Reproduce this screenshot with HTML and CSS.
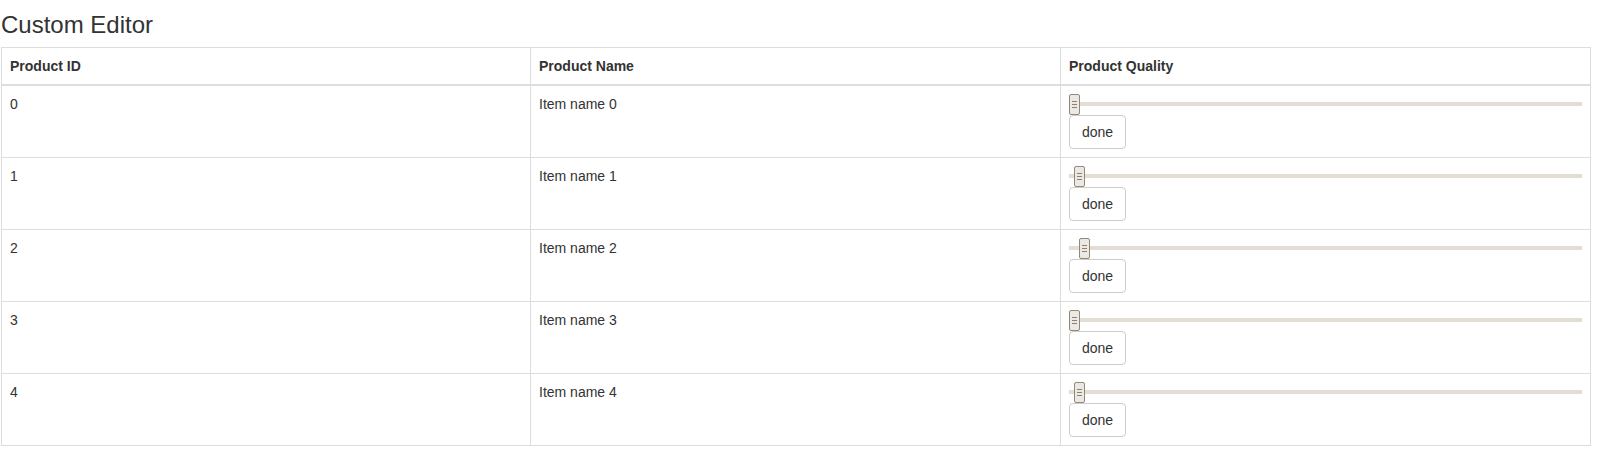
FILE: index.html
```html
<!DOCTYPE html>
<html lang="en">
<head>
<meta charset="utf-8">
<title>Custom Editor</title>
<link rel="stylesheet" href="styles.css">
</head>
<body>
<div class="page">
  <h3 class="title">Custom Editor</h3>
  <table class="grid">
    <colgroup><col class="c1"><col class="c2"><col class="c3"></colgroup>
    <thead>
      <tr><th>Product ID</th><th>Product Name</th><th>Product Quality</th></tr>
    </thead>
    <tbody>
      <tr>
        <td>0</td><td>Item name 0</td>
        <td><div class="slider"><div class="track"></div><span class="handle" style="left:0px"></span></div><button class="btn">done</button></td>
      </tr>
      <tr>
        <td>1</td><td>Item name 1</td>
        <td><div class="slider"><div class="track"></div><span class="handle" style="left:5px"></span></div><button class="btn">done</button></td>
      </tr>
      <tr>
        <td>2</td><td>Item name 2</td>
        <td><div class="slider"><div class="track"></div><span class="handle" style="left:10px"></span></div><button class="btn">done</button></td>
      </tr>
      <tr>
        <td>3</td><td>Item name 3</td>
        <td><div class="slider"><div class="track"></div><span class="handle" style="left:0px"></span></div><button class="btn">done</button></td>
      </tr>
      <tr>
        <td>4</td><td>Item name 4</td>
        <td><div class="slider"><div class="track"></div><span class="handle" style="left:5px"></span></div><button class="btn">done</button></td>
      </tr>
    </tbody>
  </table>
</div>
</body>
</html>
```
FILE: styles.css
```css
html, body {
  margin: 0;
  padding: 0;
  background: #fff;
}
body {
  font-family: "Liberation Sans", Arial, Helvetica, sans-serif;
  font-size: 14px;
  line-height: 20px;
  color: #333;
}
.page {
  padding: 0 0 0 1px;
}
.title {
  margin: 0 0 9px 0;
  padding: 12px 0 0 0;
  font-size: 24px;
  font-weight: 500;
  line-height: 26px;
  color: #333;
}
.grid {
  width: 1590px;
  border-collapse: collapse;
  border-spacing: 0;
  table-layout: fixed;
  border: 1px solid #ddd;
}
.grid col.c1 {
  width: 529px;
}
.grid col.c2, .grid col.c3 {
  width: 530px;
}
.grid th, .grid td {
  border: 1px solid #ddd;
  padding: 8px;
  text-align: left;
  vertical-align: top;
  line-height: 20px;
}
.grid th {
  font-weight: bold;
  border-bottom: 2px solid #ddd;
}
.slider {
  position: relative;
  height: 21px;
}
.track {
  position: absolute;
  left: 0;
  right: 0;
  top: 8px;
  height: 4px;
  background: #e4ddd6;
}
.handle {
  position: absolute;
  top: 0;
  width: 9px;
  height: 19px;
  border: 1px solid #928878;
  border-radius: 2px;
  background: #ece8e3;
}
.handle::before {
  content: "";
  position: absolute;
  left: 2px;
  top: 6px;
  width: 5px;
  height: 1px;
  background: #8a8075;
  box-shadow: 0 3px 0 #8a8075, 0 6px 0 #8a8075;
}
.btn {
  display: block;
  height: 34px;
  margin: 0;
  padding: 6px 12px;
  font-family: inherit;
  font-size: 14px;
  line-height: 20px;
  color: #333;
  background: #fff;
  border: 1px solid #ccc;
  border-radius: 4px;
  cursor: pointer;
}
```
